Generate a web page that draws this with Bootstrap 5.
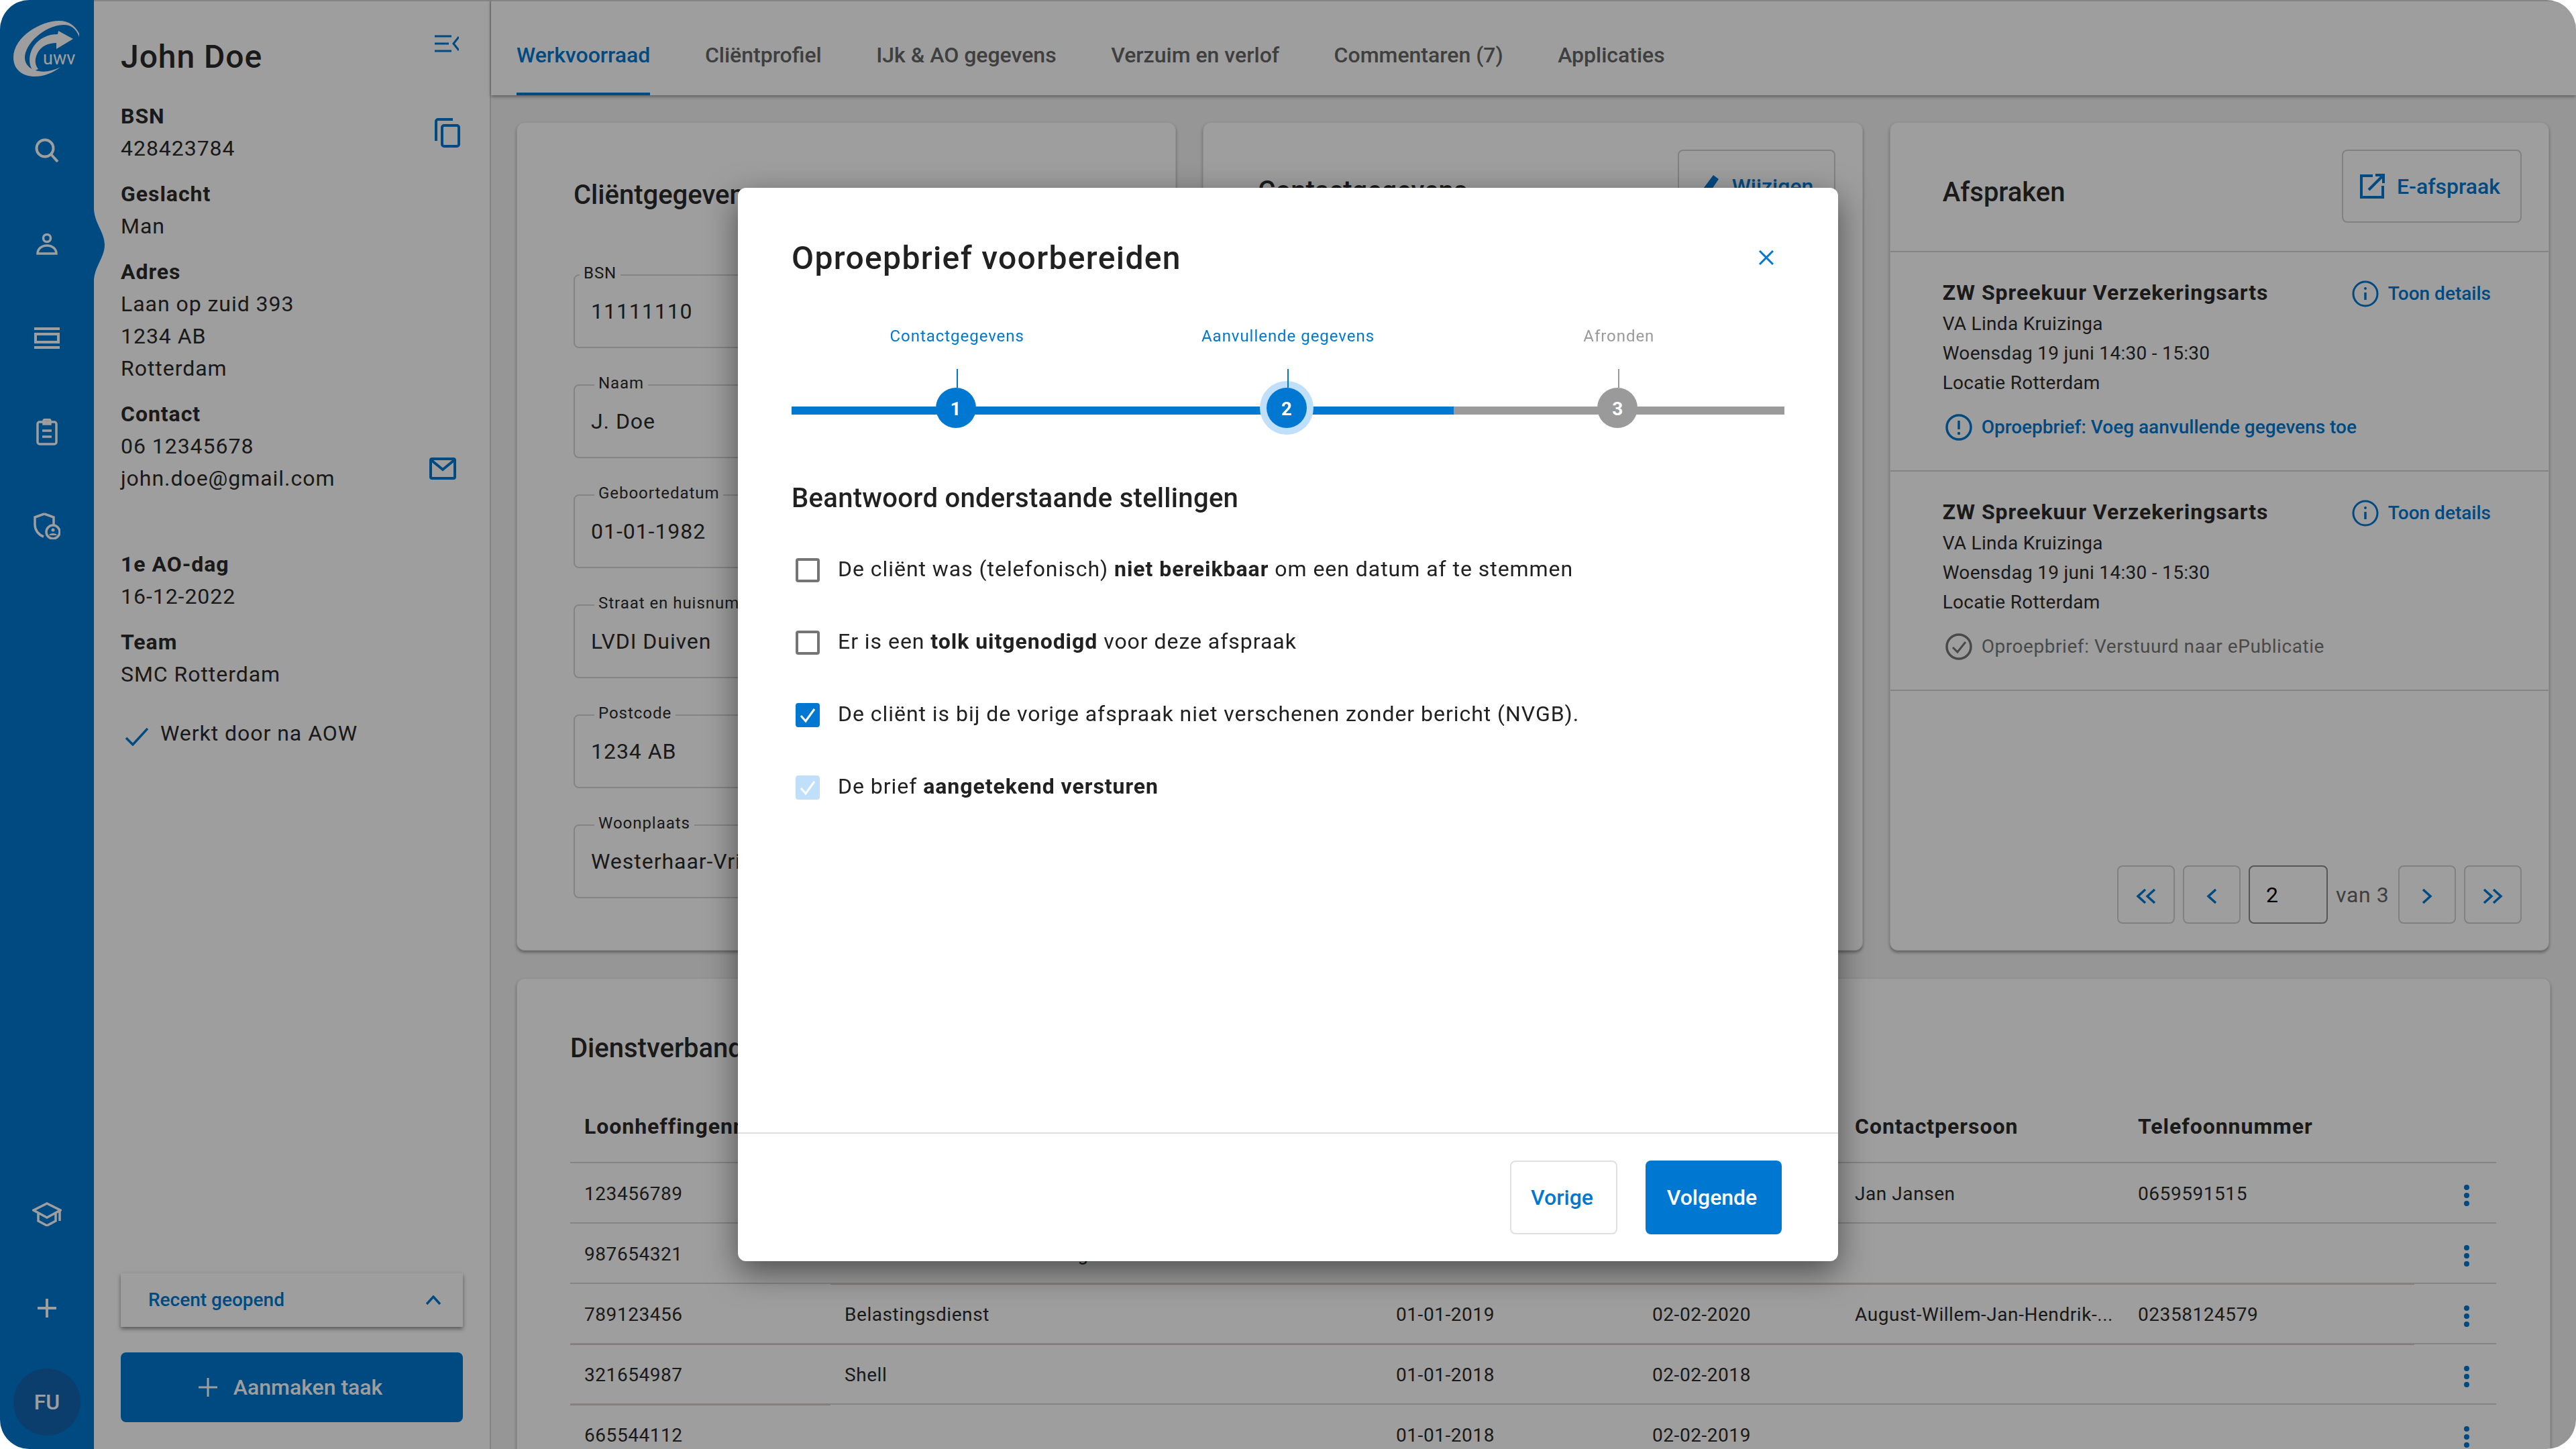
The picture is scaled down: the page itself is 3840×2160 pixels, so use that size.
<!DOCTYPE html>
<html lang="nl">
<head>
    <meta charset="UTF-8">
    <title>Oproepbrief voorbereiden</title>
    <link rel="stylesheet" href="https://cdn.jsdelivr.net/npm/bootstrap@5.3.0/dist/css/bootstrap.min.css">
    <style>
        :root { --uwv: #0078d2; --ink: #2b2b2b; --line: #d6d6d6; }
        html, body { margin: 0; background: #fff; }
        body {
            width: 3840px; height: 2160px; overflow: hidden;
            font-family: Roboto, "Liberation Sans", sans-serif;
            color: var(--ink); font-size: 32px; letter-spacing: .03em;
        }
        .app-win { position: relative; width: 3840px; height: 2160px; border-radius: 44px; overflow: hidden; }
        .dim-layer { position: absolute; inset: 0; background: rgba(0,0,0,.38); z-index: 1040; }

        /* rail */
        .rail { position: relative; width: 140px; flex: 0 0 140px; background: var(--uwv); color: #fff; }
        .rail-logo { height: 154px; padding: 30px 20px 30px; }
        .rail-slot { height: 140px; }
        .rail-bump { position: absolute; left: 140px; top: 310px; }
        .avatar-fu { width: 100px; height: 100px; border-radius: 50%; background: #1264b0; font-size: 32px; font-weight: 500; letter-spacing: 0; }

        /* client panel */
        .side-panel { width: 592px; flex: 0 0 592px; padding: 53px 40px 40px; border-right: 2px solid var(--line); border-top: 2px solid var(--line); background: #fff; }
        .client-name { font-size: 48px; line-height: 60px; font-weight: 500; margin: 0 0 34px; }
        .info-line { line-height: 48px; }
        .info-label { line-height: 48px; font-weight: 700; }
        .info-group { margin-bottom: 20px; }
        .icn-blue { color: var(--uwv); }
        .recent-box { height: 80px; padding: 0 33px 0 41px; background: #fff; box-shadow: 0 3px 6px rgba(0,0,0,.45); color: var(--uwv); font-size: 28px; font-weight: 500; letter-spacing: 0; margin-bottom: 38px; }
        .btn-new-task { height: 104px; width: 100%; background: var(--uwv); color: #fff; font-size: 32px; font-weight: 500; border: 0; border-radius: 8px; letter-spacing: 0; gap: 24px; padding: 0 4px 0 0; }
        .btn-new-task:hover { background: var(--uwv); color: #fff; }

        /* tabs */
        .main-pane { flex: 1 1 auto; min-width: 0; background: #f2f2f2; }
        .tab-strip { height: 142px; flex: 0 0 142px; padding-left: 38px; gap: 81.5px; background: #fff; border-top: 2px solid var(--line); box-shadow: 0 2px 5px rgba(0,0,0,.4); position: relative; }
        .tab-strip .nav-link { padding: 56px 0 0; color: #666; line-height: 48px; font-weight: 500; letter-spacing: 0; border-bottom: 4px solid transparent; }
        .tab-strip .nav-link.active { color: var(--uwv); border-bottom-color: var(--uwv); }

        /* cards */
        .main-scroll { padding: 40px 38px 0; overflow: hidden; flex: 1 1 auto; }
        .cards-top { display: grid; grid-template-columns: repeat(3, 1fr); gap: 40px; height: 1235px; margin-right: 2px; margin-bottom: 41px; }
        .sheet { background: #fff; border: 1px solid #e8e8e8; border-radius: 12px; box-shadow: 0 3px 4px rgba(0,0,0,.35); --bs-card-border-width: 0; }
        .sheet-title { font-size: 40px; line-height: 60px; font-weight: 500; letter-spacing: 0; margin: 0; }
        .btn-ghost { height: 109px; border: 2px solid #d0d0d0; border-radius: 8px; color: var(--uwv); font-size: 32px; font-weight: 500; letter-spacing: 0; gap: 18px; background: #fff; }
        .out-field { position: relative; height: 110px; border: 2px solid var(--line); border-radius: 8px; padding: 0 24px; margin-bottom: 54px; display: flex; align-items: center; white-space: nowrap; overflow: visible; }
        .out-label { position: absolute; left: 29px; top: -18px; background: #fff; padding: 0 6px; font-size: 24px; line-height: 28px; }
        .out-field:first-of-type .out-label { left: 7px; }

        /* afspraken */
        .appt-head { padding: 40px 40px 42px 78px; border-bottom: 2px solid var(--line); }
        .appt-item { padding: 38px 40px 42px 78px; border-bottom: 2px solid var(--line); }
        .appt-title { font-size: 32px; line-height: 44px; font-weight: 700; margin-bottom: 3px; }
        .appt-line { font-size: 28px; line-height: 44px; letter-spacing: .3px; }
        .appt-link { font-size: 28px; line-height: 44px; font-weight: 500; letter-spacing: 0; color: var(--uwv); gap: 14px; }
        .appt-link-done { color: #777; font-weight: 400; letter-spacing: .02em; }
        .pager { padding: 0 40px 39px 0; gap: 12px; }
        .pager-btn { width: 86px; height: 87px; border: 2px solid #d0d0d0; border-radius: 8px; color: var(--uwv); background: #fff; padding: 0; }
        .pager-input { width: 118px; height: 87px; border: 2px solid #8c8c8c; border-radius: 8px; padding: 0 24px; font-size: 32px; letter-spacing: 0; color: #000; }
        .pager-of { color: #666; width: 81px; white-space: nowrap; letter-spacing: .02em; }

        /* dienstverband */
        .sheet-jobs { padding: 74px 80px 0 79px; height: 900px; }
        .jobs-table { table-layout: fixed; width: 2871px; margin: 49px 0 0; font-size: 28px; --bs-table-bg: transparent; --bs-table-color: var(--ink); --bs-table-border-color: var(--line); border-color: var(--line); }
        .jobs-table th { font-size: 32px; line-height: 44px; font-weight: 700; padding: 15px 0 31px 21px; border-bottom: 2px solid var(--line); white-space: nowrap; overflow: hidden; }
        .jobs-table td { height: 90px; padding: 4px 0 0 21px; vertical-align: middle; line-height: 44px; white-space: nowrap; border-bottom: 2px solid var(--line); letter-spacing: .02em; }
        .jobs-table td.pink-under { box-shadow: 0 2px 0 #e4b9b9; }

        /* modal */
        .modal { --bs-modal-width: 1640px; --bs-modal-bg: #fff; --bs-modal-border-width: 0; --bs-modal-border-radius: 12px; --bs-modal-inner-border-radius: 12px; --bs-modal-padding: 0; --bs-modal-footer-gap: 0; overflow: hidden; }
        .modal-content { height: 1600px; box-shadow: 0 16px 48px rgba(0,0,0,.5); }
        .modal-header { padding: 75px 96px 0 80px; border: 0; align-items: flex-start; }
        .modal-title { font-size: 48px; line-height: 60px; font-weight: 500; letter-spacing: .028em; color: #212121; }
        .close-x { border: 0; background: none; padding: 0; margin-top: 18px; line-height: 0; color: var(--uwv); }
        .modal-body { padding: 70px 80px 0 80px; }
        .step-wrap { position: relative; display: grid; grid-template-columns: repeat(3, 1fr); }
        .step-col { display: flex; flex-direction: column; align-items: center; font-size: 24px; line-height: 32px; letter-spacing: .04em; color: var(--uwv); }
        .step-col.todo { color: #9a9a9a; }
        .step-tick { width: 2px; height: 28px; background: currentColor; margin-top: 33px; position: relative; z-index: 3; }
        .step-dot { width: 60px; height: 60px; border-radius: 50%; background: var(--uwv); color: #fff; font-weight: 700; font-size: 28px; letter-spacing: 0; padding-top: 3px; margin-right: 4px; position: relative; z-index: 2; }
        .step-col.todo .step-dot { background: #9a9a9a; }
        .step-col.current .step-dot { box-shadow: 0 0 0 10px #bfdffa; }
        .step-bar { position: absolute; left: 0; right: 0; top: 121px; height: 12px; border-radius: 0; background: #9a9a9a; z-index: 1; }
        .step-bar .progress-bar { background: var(--uwv); }
        .modal-sub { font-size: 40px; line-height: 60px; font-weight: 500; letter-spacing: .3px; margin: 75px 0 51px; color: #212121; }
        .claim-row { display: flex; align-items: center; gap: 27px; line-height: 48px; margin-bottom: 60px; color: #212121; padding-left: 6px; }
        .claim-row .form-check-input { width: 36px; height: 36px; margin: 4px 0 0; border: 4px solid #757575; border-radius: 4px; flex: none; }
        .claim-row .form-check-input:checked {
            background-color: var(--uwv); border-color: var(--uwv);
            background-size: 100% 100%;
            background-image: url("data:image/svg+xml,%3csvg xmlns='http://www.w3.org/2000/svg' viewBox='0 0 28 28'%3e%3cpath fill='none' stroke='%23fff' stroke-width='3' d='M4 15l7 8L24 5'/%3e%3c/svg%3e");
        }
        .claim-row .form-check-input:disabled { opacity: 1; background-color: #bfdffa; border-color: #bfdffa; }
        .modal-footer { padding: 40px 84px 40px 0; border-top: 2px solid #e0e0e0; gap: 42px; }
        .btn-prev, .btn-next { height: 110px; border-radius: 8px; font-size: 32px; font-weight: 500; letter-spacing: 0; padding: 0 5px 0 0; }
        .btn-prev { width: 160px; border: 2px solid #e0e0e0; color: var(--uwv); background: #fff; }
        .btn-next { width: 203px; border: 0; color: #fff; background: var(--uwv); }
    </style>
</head>
<body>
<div class="app-win d-flex">

    <!-- rail -->
    <aside class="rail d-flex flex-column">
        <div class="rail-logo">
            <svg width="100" height="84" viewBox="0 0 100 84" fill="#fff">
                <path d="M98 20C92 8 82 1 68 1 42 1 0 24 0 56c0 18 14 28 32 28 14 0 28-6 38-14-10 5-22 8-32 6-10-1-21-8-21-20 0-20 28-48 58-49 9 0 18 4 23 18z"/>
                <path d="M30 76C22 68 22 50 31 38c8-11 20-17 35-17l1-5 22 12-25 15 0-9c-12 0-23 5-28 15-4 8-5 16 1 24z"/>
                <text x="44" y="66" font-family="Roboto, sans-serif" font-size="27" letter-spacing="0">uwv</text>
            </svg>
        </div>
        <div class="rail-slot d-flex align-items-center justify-content-center">
            <svg width="36" height="36" viewBox="0 0 36 36" fill="none" stroke="#fff" stroke-width="4"><circle cx="15" cy="15" r="12.5"/><path d="M24 24l10 11"/></svg>
        </div>
        <div class="rail-slot d-flex align-items-center justify-content-center">
            <svg width="32" height="32" viewBox="0 0 32 32" fill="none" stroke="#fff" stroke-width="3.5"><circle cx="16" cy="7" r="5.5"/><path d="M2 30c0-7 6-12 14-12s14 5 14 12z"/></svg>
        </div>
        <div class="rail-slot d-flex align-items-center justify-content-center">
            <svg width="38" height="32" viewBox="0 0 38 32" fill="none" stroke="#fff" stroke-width="4"><path d="M0 2h38M0 30h38"/><rect x="2" y="10" width="34" height="12"/></svg>
        </div>
        <div class="rail-slot d-flex align-items-center justify-content-center">
            <svg width="32" height="40" viewBox="0 0 32 40" fill="none" stroke="#fff" stroke-width="3.5"><rect x="2" y="5" width="28" height="33" rx="3"/><path d="M11 5V3.500a2 2 0 0 1 2-2h6a2 2 0 0 1 2 2V8H11zM9 18h14M9 27h14"/></svg>
        </div>
        <div class="rail-slot d-flex align-items-center justify-content-center">
            <svg width="40" height="40" viewBox="0 0 40 40" fill="none" stroke="#fff" stroke-width="3.500"><path d="M16 2l14 5v11M15 36C7 33 2 26 2 18V7l14-5"/><circle cx="29" cy="29" r="10"/><circle cx="29" cy="26" r="2.500" fill="#fff" stroke="none"/><path d="M23 34c1-4 11-4 12 0z" fill="#fff" stroke="none"/></svg>
        </div>
        <div class="mt-auto">
            <div class="rail-slot d-flex align-items-center justify-content-center">
                <svg width="44" height="36" viewBox="0 0 44 36" fill="none" stroke="#fff" stroke-width="3.500"><path d="M2 12L22 2l20 10-20 11zM9 17v11l13 7 13-7V17M41 12v16"/></svg>
            </div>
            <div class="rail-slot d-flex align-items-center justify-content-center">
                <svg width="28" height="28" viewBox="0 0 28 28" stroke="#fff" stroke-width="4"><path d="M14 0v28M0 14h28"/></svg>
            </div>
            <div class="rail-slot d-flex align-items-center justify-content-center">
                <div class="avatar-fu d-flex align-items-center justify-content-center">FU</div>
            </div>
        </div>
        <svg class="rail-bump" width="16" height="110" viewBox="0 0 16 110" fill="#0078d2"><path d="M0 0c0 22 16 36 16 55S0 88 0 110z"/></svg>
    </aside>

    <!-- client panel -->
    <aside class="side-panel d-flex flex-column">
        <div class="d-flex justify-content-between align-items-start">
            <h1 class="client-name">John Doe</h1>
            <svg class="icn-blue" style="margin:-3px 6px 0 0" width="36" height="26" viewBox="0 0 36 26" fill="none" stroke="currentColor" stroke-width="3"><path d="M0 2h25M0 13h21M0 24h25M36 3l-8 10 8 10"/></svg>
        </div>
        <div class="info-group d-flex justify-content-between align-items-start">
            <div><div class="info-label">BSN</div><div class="info-line">428423784</div></div>
            <svg class="icn-blue" style="margin:27px 4px 0 0" width="38" height="44" viewBox="0 0 38 44" fill="none" stroke="currentColor" stroke-width="4"><path d="M2 34V5a3 3 0 0 1 3-3h22"/><rect x="11" y="11" width="25" height="31" rx="3"/></svg>
        </div>
        <div class="info-group"><div class="info-label">Geslacht</div><div class="info-line">Man</div></div>
        <div class="info-group"><div class="info-label">Adres</div><div class="info-line">Laan op zuid 393</div><div class="info-line">1234 AB</div><div class="info-line">Rotterdam</div></div>
        <div class="info-group d-flex justify-content-between align-items-start" style="margin-bottom:80px">
            <div><div class="info-label">Contact</div><div class="info-line">06 12345678</div><div class="info-line">john.doe@gmail.com</div></div>
            <svg class="icn-blue" style="margin:89px 10px 0 0" width="40" height="33" viewBox="0 0 40 33" fill="none" stroke="currentColor" stroke-width="4"><rect x="2" y="2" width="36" height="29" rx="2"/><path d="M3 4l17 14L37 4"/></svg>
        </div>
        <div class="info-group"><div class="info-label">1e AO-dag</div><div class="info-line">16-12-2022</div></div>
        <div class="info-group" style="margin-bottom:40px"><div class="info-label">Team</div><div class="info-line">SMC Rotterdam</div></div>
        <div class="d-flex align-items-center info-line" style="gap:18px">
            <svg class="icn-blue" style="margin:10px 0 0 7px" width="34" height="27" viewBox="0 0 34 27" fill="none" stroke="currentColor" stroke-width="3.500"><path d="M1 15l10 10L33 1"/></svg>
            <span>Werkt door na AOW</span>
        </div>
        <div class="recent-box d-flex align-items-center justify-content-between mt-auto">
            <span>Recent geopend</span>
            <svg width="22" height="14" viewBox="0 0 22 14" fill="none" stroke="currentColor" stroke-width="3.500"><path d="M1 13L11 2l10 11"/></svg>
        </div>
        <button class="btn btn-new-task d-flex align-items-center justify-content-center">
            <svg width="28" height="28" viewBox="0 0 28 28" stroke="#fff" stroke-width="3"><path d="M14 0v28M0 14h28"/></svg>
            <span>Aanmaken taak</span>
        </button>
    </aside>

    <!-- main -->
    <main class="main-pane d-flex flex-column">
        <nav class="nav tab-strip">
            <a class="nav-link active" href="#">Werkvoorraad</a>
            <a class="nav-link" href="#">Cliëntprofiel</a>
            <a class="nav-link" href="#">IJk &amp; AO gegevens</a>
            <a class="nav-link" href="#">Verzuim en verlof</a>
            <a class="nav-link" href="#">Commentaren (7)</a>
            <a class="nav-link" href="#">Applicaties</a>
        </nav>

        <div class="main-scroll">
            <div class="cards-top">
                <section class="card sheet" style="padding:78px 84px 0">
                    <h2 class="sheet-title" style="margin-bottom:88px">Cliëntgegevens</h2>
                    <div class="out-field"><span class="out-label">BSN</span>11111110</div>
                    <div class="out-field"><span class="out-label">Naam</span>J. Doe</div>
                    <div class="out-field"><span class="out-label">Geboortedatum</span>01-01-1982</div>
                    <div class="out-field"><span class="out-label">Straat en huisnummer</span>LVDI Duiven</div>
                    <div class="out-field"><span class="out-label">Postcode</span>1234 AB</div>
                    <div class="out-field"><span class="out-label">Woonplaats</span>Westerhaar-Vriezenveensewijk</div>
                </section>

                <section class="card sheet" style="padding:40px 40px 0 81px">
                    <div class="d-flex justify-content-between align-items-start">
                        <h2 class="sheet-title" style="margin-top:32px">Contactgegevens</h2>
                        <button class="btn btn-ghost d-flex align-items-center" style="width:235px;padding:0 0 0 31px">
                            <svg width="30" height="36" viewBox="0 0 30 36" fill="currentColor"><path d="M20 1l8 6L11 32l-10 3 1-10z"/></svg>
                            <span>Wijzigen</span>
                        </button>
                    </div>
                </section>

                <section class="card sheet">
                    <div class="appt-head d-flex justify-content-between align-items-start">
                        <h2 class="sheet-title" style="margin-top:34px">Afspraken</h2>
                        <button class="btn btn-ghost d-flex align-items-center" style="width:268px;padding:0 0 0 24px">
                            <svg width="38" height="38" viewBox="0 0 38 38" fill="none" stroke="currentColor" stroke-width="4"><path d="M20 3H3v32h32V18M14 24L36 2M24 2h12v12"/></svg>
                            <span>E-afspraak</span>
                        </button>
                    </div>
                    <div class="appt-item">
                        <div class="d-flex justify-content-between">
                            <div class="appt-title">ZW Spreekuur Verzekeringsarts</div>
                            <div class="appt-link d-flex align-items-center" style="margin-right:46px">
                                <svg width="40" height="40" viewBox="0 0 40 40" fill="none" stroke="currentColor" stroke-width="3"><circle cx="20" cy="20" r="18"/><path d="M20 18v11" stroke-width="3.500"/><circle cx="20" cy="12" r="2" fill="currentColor" stroke="none"/></svg>
                                <span>Toon details</span>
                            </div>
                        </div>
                        <div class="appt-line">VA Linda Kruizinga</div>
                        <div class="appt-line">Woensdag 19 juni 14:30 - 15:30</div>
                        <div class="appt-line">Locatie Rotterdam</div>
                        <div class="appt-link d-flex align-items-center" style="margin-top:22px;margin-left:4px">
                            <svg width="40" height="40" viewBox="0 0 40 40" fill="none" stroke="currentColor" stroke-width="3.500"><circle cx="20" cy="20" r="18"/><path d="M20 10v13"/><circle cx="20" cy="29" r="2.200" fill="currentColor" stroke="none"/></svg>
                            <span>Oproepbrief: Voeg aanvullende gegevens toe</span>
                        </div>
                    </div>
                    <div class="appt-item">
                        <div class="d-flex justify-content-between">
                            <div class="appt-title">ZW Spreekuur Verzekeringsarts</div>
                            <div class="appt-link d-flex align-items-center" style="margin-right:46px">
                                <svg width="40" height="40" viewBox="0 0 40 40" fill="none" stroke="currentColor" stroke-width="3"><circle cx="20" cy="20" r="18"/><path d="M20 18v11" stroke-width="3.500"/><circle cx="20" cy="12" r="2" fill="currentColor" stroke="none"/></svg>
                                <span>Toon details</span>
                            </div>
                        </div>
                        <div class="appt-line">VA Linda Kruizinga</div>
                        <div class="appt-line">Woensdag 19 juni 14:30 - 15:30</div>
                        <div class="appt-line">Locatie Rotterdam</div>
                        <div class="appt-link appt-link-done d-flex align-items-center" style="margin-top:22px;margin-left:4px">
                            <svg width="40" height="40" viewBox="0 0 40 40" fill="none" stroke="currentColor" stroke-width="3.500"><circle cx="20" cy="20" r="18"/><path d="M11 21l7 7 12-15" stroke-width="3"/></svg>
                            <span>Oproepbrief: Verstuurd naar ePublicatie</span>
                        </div>
                    </div>
                    <div class="pager d-flex justify-content-end align-items-center mt-auto">
                        <button class="pager-btn"><svg width="30" height="24" viewBox="0 0 30 24" fill="none" stroke="currentColor" stroke-width="3.500"><path d="M14 2L3 12l11 10M28 2L17 12l11 10"/></svg></button>
                        <button class="pager-btn"><svg width="16" height="24" viewBox="0 0 16 24" fill="none" stroke="currentColor" stroke-width="3.500"><path d="M14 2L3 12l11 10"/></svg></button>
                        <div class="pager-input d-flex align-items-center">2</div>
                        <div class="pager-of">van 3</div>
                        <button class="pager-btn"><svg width="16" height="24" viewBox="0 0 16 24" fill="none" stroke="currentColor" stroke-width="3.500"><path d="M2 2l11 10L2 22"/></svg></button>
                        <button class="pager-btn"><svg width="30" height="24" viewBox="0 0 30 24" fill="none" stroke="currentColor" stroke-width="3.500"><path d="M2 2l11 10L2 22M16 2l11 10-11 10"/></svg></button>
                    </div>
                </section>
            </div>

            <section class="card sheet sheet-jobs">
                <h2 class="sheet-title">Dienstverband</h2>
                <table class="table jobs-table">
                    <colgroup><col style="width:388px"><col style="width:822px"><col style="width:382px"><col style="width:302px"><col style="width:422px"><col style="width:433px"><col style="width:122px"></colgroup>
                    <thead>
                        <tr><th>Loonheffingennummer</th><th>Werkgever</th><th>Startdatum</th><th>Einddatum</th><th>Contactpersoon</th><th>Telefoonnummer</th><th></th></tr>
                    </thead>
                    <tbody id="jobRows"></tbody>
                </table>
            </section>
        </div>
    </main>

    <div class="dim-layer"></div>
</div>

<!-- Oproepbrief modal -->
<div class="modal d-block show" tabindex="-1">
    <div class="modal-dialog modal-dialog-centered">
        <div class="modal-content">
            <div class="modal-header">
                <h5 class="modal-title">Oproepbrief voorbereiden</h5>
                <button type="button" class="close-x ms-auto" aria-label="Sluiten">
                    <svg width="22" height="22" viewBox="0 0 22 22" fill="none" stroke="currentColor" stroke-width="3"><path d="M1 1l20 20M21 1L1 21"/></svg>
                </button>
            </div>
            <div class="modal-body">
                <div class="step-wrap">
                    <div class="progress step-bar"><div class="progress-bar" style="width:66.67%"></div></div>
                    <div class="step-col">
                        <span>Contactgegevens</span><div class="step-tick"></div>
                        <div class="step-dot d-flex align-items-center justify-content-center">1</div>
                    </div>
                    <div class="step-col current">
                        <span>Aanvullende gegevens</span><div class="step-tick"></div>
                        <div class="step-dot d-flex align-items-center justify-content-center">2</div>
                    </div>
                    <div class="step-col todo">
                        <span>Afronden</span><div class="step-tick"></div>
                        <div class="step-dot d-flex align-items-center justify-content-center">3</div>
                    </div>
                </div>

                <h3 class="modal-sub">Beantwoord onderstaande stellingen</h3>

                <label class="claim-row"><input class="form-check-input" type="checkbox"><span>De cliënt was (telefonisch) <strong>niet bereikbaar</strong> om een datum af te stemmen</span></label>
                <label class="claim-row"><input class="form-check-input" type="checkbox"><span>Er is een <strong>tolk uitgenodigd</strong> voor deze afspraak</span></label>
                <label class="claim-row"><input class="form-check-input" type="checkbox" checked><span>De cliënt is bij de vorige afspraak niet verschenen zonder bericht (NVGB).</span></label>
                <label class="claim-row"><input class="form-check-input" type="checkbox" checked disabled><span>De brief <strong>aangetekend versturen</strong></span></label>
            </div>
            <div class="modal-footer">
                <button class="btn btn-prev">Vorige</button>
                <button class="btn btn-next">Volgende</button>
            </div>
        </div>
    </div>
</div>

<script>
    // Dienstverband rows
    var jobs = [
        ["123456789", "Albert Heijn", "01-01-2020", "02-02-2021", "Jan Jansen", "0659591515", ""],
        ["987654321", "Nationale Nederlanden Zorg", "01-01-2019", "02-02-2020", "", "", ""],
        ["789123456", "Belastingsdienst", "01-01-2019", "02-02-2020", "August-Willem-Jan-Hendrik-...", "02358124579", "all"],
        ["321654987", "Shell", "01-01-2018", "02-02-2018", "", "", "first"],
        ["665544112", "", "01-01-2018", "02-02-2019", "", "", ""]
    ];
    var kebab = '<svg width="8" height="32" viewBox="0 0 8 32" fill="#0078d2"><circle cx="4" cy="4" r="4"/><circle cx="4" cy="16" r="4"/><circle cx="4" cy="28" r="4"/></svg>';
    var html = "";
    jobs.forEach(function (job, r) {
        html += "<tr>";
        for (var c = 0; c < 6; c++) {
            var pink = job[6] === "all" || (job[6] === "first" && c === 0) || (r === 1 && c > 0);
            html += "<td" + (pink ? ' class="pink-under"' : "") + ">" + job[c] + "</td>";
        }
        html += '<td style="padding-left:74px">' + kebab + "</td></tr>";
    });
    document.getElementById("jobRows").innerHTML = html;
</script>
<script src="https://cdn.jsdelivr.net/npm/bootstrap@5.3.0/dist/js/bootstrap.bundle.min.js"></script>
</body>
</html>
